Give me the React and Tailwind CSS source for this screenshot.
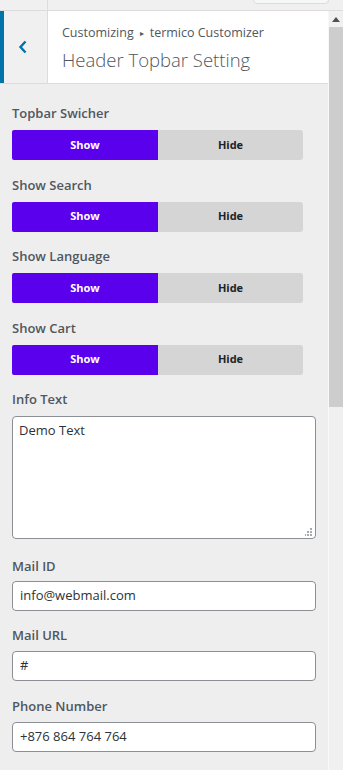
import React from "react";

const font = { fontFamily: '"Open Sans", "Noto Sans", sans-serif' };

function Toggle() {
  return (
    <div className="flex h-[30px] w-[291px] text-[11px] font-bold">
      <div className="flex w-[146px] items-center justify-center rounded-l-[2px] bg-[#5b00ed] text-white">Show</div>
      <div className="flex flex-1 items-center justify-center rounded-r-[3px] bg-[#d5d5d5] text-[#1d2327]">Hide</div>
    </div>
  );
}

function Label({ children }) {
  return <div className="text-[13px] font-semibold leading-[20px] text-[#50575e]">{children}</div>;
}

function TextInput({ value }) {
  return (
    <div className="flex h-[30px] w-[304px] items-center rounded-[4px] border border-[#8c8f94] bg-white px-[7px] text-[13px] text-[#2c3338]">
      {value}
    </div>
  );
}

export default function App() {
  return (
    <div className="h-[770px] w-[343px] overflow-hidden bg-[#eeeeee]" style={font}>
      {/* top strip */}
      <div className="flex h-[11px] border-b border-[#dcdcde] bg-[#f0f0f1]">
        <div className="w-[48px] border-r border-[#dcdcde]" />
        <div className="flex-1" />
        <div className="-mt-[8px] mr-[14px] h-[12px] w-[76px] rounded-[4px] border border-[#dcdcde] bg-[#f6f7f7]" />
      </div>
      <div className="flex h-[759px]">
        <div className="w-[328px]">
          {/* header */}
          <div className="flex h-[73px] border-b border-[#dcdcde] bg-white">
            <div className="flex w-[48px] border-r border-[#dcdcde] bg-[#f0f0f1]">
              <div className="w-[4px] bg-[#0073aa]" />
              <div className="flex flex-1 items-center justify-center pr-[6px]">
                <svg width="10" height="14" viewBox="0 0 10 14">
                  <path d="M7.5 1.5 L2.5 7 L7.5 12.5" fill="none" stroke="#0073aa" strokeWidth="2.4" />
                </svg>
              </div>
            </div>
            <div className="flex flex-1 flex-col pl-[14px] pt-[13px]">
              <div className="flex items-center text-[12.5px] leading-[18px] text-[#50575e]">
                Customizing
                <span className="mx-[6px] text-[8px]">▸</span>
                termico Customizer
              </div>
              <div className="mt-[5px] text-[18.5px] font-light leading-[26px] text-[#50575e]">Header Topbar Setting</div>
            </div>
          </div>
          {/* controls */}
          <div className="flex flex-col px-[12px] pt-[19px]">
            <Label>Topbar Swicher</Label>
            <div className="mt-[7px]"><Toggle /></div>
            <div className="mt-[14.5px]"><Label>Show Search</Label></div>
            <div className="mt-[7px]"><Toggle /></div>
            <div className="mt-[14.5px]"><Label>Show Language</Label></div>
            <div className="mt-[7px]"><Toggle /></div>
            <div className="mt-[14.5px]"><Label>Show Cart</Label></div>
            <div className="mt-[7px]"><Toggle /></div>
            <div className="mt-[14px]"><Label>Info Text</Label></div>
            <div className="relative mt-[7px] h-[123px] w-[304px] rounded-[4px] border border-[#8c8f94] bg-white px-[6px] pt-[3px] text-[13px] leading-[20px] text-[#2c3338]">
              Demo Text
              <svg className="absolute bottom-[2px] right-[2px]" width="8" height="8" viewBox="0 0 8 8">
                <rect x="5" y="0" width="2" height="2" fill="#a7aaad" />
                <rect x="2" y="3" width="2" height="2" fill="#a7aaad" />
                <rect x="5" y="3" width="2" height="2" fill="#a7aaad" />
                <rect x="-1" y="6" width="2" height="2" fill="#a7aaad" />
                <rect x="2" y="6" width="2" height="2" fill="#a7aaad" />
                <rect x="5" y="6" width="2" height="2" fill="#a7aaad" />
              </svg>
            </div>
            <div className="mt-[17px]"><Label>Mail ID</Label></div>
            <div className="mt-[5px]"><TextInput value="info@webmail.com" /></div>
            <div className="mt-[14px]"><Label>Mail URL</Label></div>
            <div className="mt-[6px]"><TextInput value="#" /></div>
            <div className="mt-[15px]"><Label>Phone Number</Label></div>
            <div className="mt-[6px]"><TextInput value="+876 864 764 764" /></div>
          </div>
        </div>
        {/* scrollbar */}
        <div className="flex w-[15px] flex-col border-l border-[#f8f8f8] bg-[#f0f0f0]">
          <div className="flex h-[16px] items-center justify-center">
            <svg width="8" height="5" viewBox="0 0 8 5">
              <path d="M0 5 L4 0 L8 5 Z" fill="#505050" />
            </svg>
          </div>
          <div className="h-[380px] bg-[#cdcdcd]" />
        </div>
      </div>
    </div>
  );
}
